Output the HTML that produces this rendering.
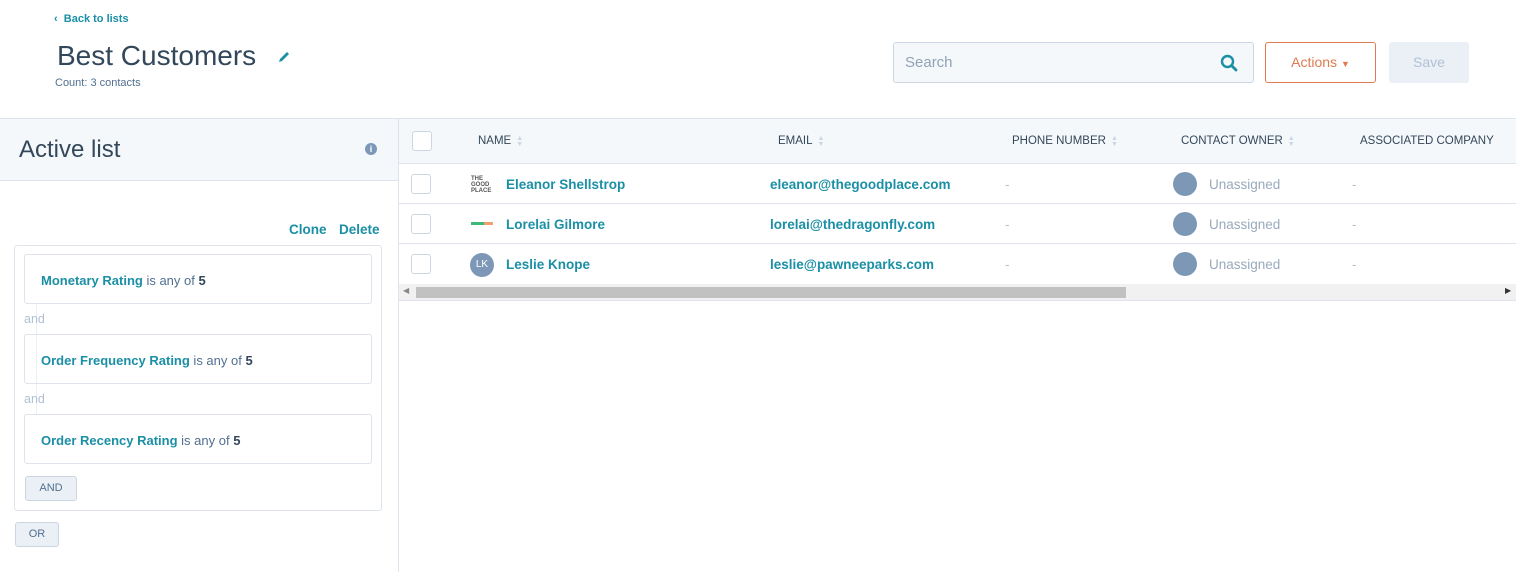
<!DOCTYPE html>
<html><head><style>
*{margin:0;padding:0;box-sizing:border-box}
body{width:1516px;height:572px;background:#fff;font-family:"Liberation Sans",sans-serif;position:relative;overflow:hidden;color:#33475b}
.a{position:absolute}
.t{color:#1a8fa5;font-weight:bold}
.cb{position:absolute;left:12px;width:20px;height:20px;border:1px solid #cbd6e2;border-radius:3px;background:#fff}
.th{position:absolute;top:135px;font-size:11.5px;color:#33475b}
.sort{display:inline-block;width:8px;height:12px;vertical-align:-2px;margin-left:5px;color:#cbd6e2;font-size:7px;line-height:6px}
.row{position:absolute;left:399px;right:0;height:40px;border-bottom:1px solid #dfe3eb}
.row span{position:absolute;top:13px;font-size:13.5px}
.dash{color:#b0c1d4}
.own{position:absolute;left:774px;top:8px;width:24px;height:24px;border-radius:50%;background:#7c98b6}
.un{left:810px;color:#99a9bb}
.filt{position:absolute;left:24px;width:348px;height:50px;border:1px solid #dfe3eb;border-radius:3px;font-size:13px;padding:18px 0 0 16px;color:#516f90}
.filt b.t{font-weight:bold}
.and{position:absolute;left:24px;font-size:12.5px;color:#b0c1d4}
.btn{position:absolute;background:#eaf0f6;border:1px solid #cbd6e2;border-radius:3px;font-size:11px;color:#516f90;text-align:center}
</style></head><body>
<div class="a t" style="left:54px;top:13px;font-size:11px">‹&nbsp; Back to lists</div>
<div class="a" style="left:57px;top:40px;font-size:28px;color:#33475b">Best Customers</div>
<svg class="a" style="left:277px;top:50px" width="14" height="14" viewBox="0 0 14 14"><path d="M2 12 L3 9 L10 2 L12 4 L5 11 Z" fill="#1a8fa5"/></svg>
<div class="a" style="left:55px;top:77px;font-size:11px;color:#516f90">Count: 3 contacts</div>
<div class="a" style="left:893px;top:42px;width:361px;height:41px;border:1px solid #cbd6e2;border-radius:3px;background:#f5f8fa"></div>
<div class="a" style="left:905px;top:54px;font-size:15px;color:#8fa2b6">Search</div>
<svg class="a" style="left:1220px;top:54px" width="18" height="18" viewBox="0 0 18 18"><circle cx="7.5" cy="7.5" r="5.5" stroke="#1a8fa5" stroke-width="2.4" fill="none"/><path d="M11.5 11.5 L16 16" stroke="#1a8fa5" stroke-width="2.8" stroke-linecap="round"/></svg>
<div class="a" style="left:1265px;top:42px;width:111px;height:41px;border:1px solid #e07a4f;border-radius:3px;font-size:14px;color:#e07a4f;text-align:center;line-height:39px">Actions <span style="font-size:9px">▼</span></div>
<div class="a" style="left:1389px;top:42px;width:80px;height:41px;border-radius:3px;background:#eaf0f6;font-size:14px;color:#b0c1d4;text-align:center;line-height:40px">Save</div>

<div class="a" style="left:0;top:118px;width:1516px;height:1px;background:#dfe3eb"></div>
<div class="a" style="left:0;top:119px;width:398px;height:62px;background:#f5f8fa;border-bottom:1px solid #dfe3eb"></div>
<div class="a" style="left:19px;top:136px;font-size:24px;color:#33475b">Active list</div>
<div class="a" style="left:365px;top:143px;width:12px;height:12px;border-radius:50%;background:#7c98b6;color:#fff;font-size:9px;font-weight:bold;text-align:center;line-height:12px">i</div>
<div class="a" style="left:398px;top:119px;width:1px;height:453px;background:#dfe3eb"></div>
<div class="a t" style="left:289px;top:222px;font-size:13.5px">Clone</div>
<div class="a t" style="left:339px;top:222px;font-size:13.5px">Delete</div>
<div class="a" style="left:14px;top:245px;width:368px;height:266px;border:1px solid #dfe3eb;border-radius:3px"></div>
<div class="a" style="left:36px;top:304px;width:1px;height:110px;background:#eaf0f6"></div>
<div class="filt" style="top:254px"><b class="t">Monetary Rating</b> is any of <b style="color:#33475b">5</b></div>
<div class="and" style="top:312px">and</div>
<div class="filt" style="top:334px"><b class="t">Order Frequency Rating</b> is any of <b style="color:#33475b">5</b></div>
<div class="and" style="top:392px">and</div>
<div class="filt" style="top:414px"><b class="t">Order Recency Rating</b> is any of <b style="color:#33475b">5</b></div>
<div class="btn" style="left:25px;top:476px;width:52px;height:25px;line-height:23px">AND</div>
<div class="btn" style="left:15px;top:522px;width:44px;height:25px;line-height:23px">OR</div>

<div class="a" style="left:399px;top:119px;right:0;height:45px;background:#f5f8fa;border-bottom:1px solid #dfe3eb"></div>
<div class="cb" style="left:412px;top:131px"></div>
<div class="th" style="left:478px">NAME<span class="sort">▲<br>▼</span></div>
<div class="th" style="left:778px">EMAIL<span class="sort">▲<br>▼</span></div>
<div class="th" style="left:1012px">PHONE NUMBER<span class="sort">▲<br>▼</span></div>
<div class="th" style="left:1181px">CONTACT OWNER<span class="sort">▲<br>▼</span></div>
<div class="th" style="left:1360px">ASSOCIATED COMPANY</div>

<div class="row" style="top:164px"><div class="cb" style="top:10px"></div>
<div class="a" style="left:72px;top:12px;font-size:6px;line-height:6px;color:#555;font-weight:bold">THE<br>GOOD<br>PLACE</div>
<span class="t" style="left:107px">Eleanor Shellstrop</span><span class="t" style="left:371px">eleanor@thegoodplace.com</span><span class="dash" style="left:606px">-</span><div class="own"></div><span class="un">Unassigned</span><span class="dash" style="left:953px">-</span></div>
<div class="row" style="top:204px"><div class="cb" style="top:10px"></div>
<div class="a" style="left:72px;top:18px;width:22px;height:3px;background:linear-gradient(90deg,#3cb878 60%,#f0a070 60%)"></div>
<span class="t" style="left:107px">Lorelai Gilmore</span><span class="t" style="left:371px">lorelai@thedragonfly.com</span><span class="dash" style="left:606px">-</span><div class="own"></div><span class="un">Unassigned</span><span class="dash" style="left:953px">-</span></div>
<div class="row" style="top:244px;border-bottom:none"><div class="cb" style="top:10px"></div>
<div class="a" style="left:71px;top:9px;width:24px;height:24px;border-radius:50%;background:#7c98b6;color:#fff;font-size:10px;text-align:center;line-height:24px">LK</div>
<span class="t" style="left:107px">Leslie Knope</span><span class="t" style="left:371px">leslie@pawneeparks.com</span><span class="dash" style="left:606px">-</span><div class="own"></div><span class="un">Unassigned</span><span class="dash" style="left:953px">-</span></div>
<div class="a" style="left:399px;top:284px;right:0;height:17px;background:#f1f1f1;border-bottom:1px solid #dfe3eb"></div>
<div class="a" style="left:416px;top:287px;width:710px;height:11px;background:#c1c1c1"></div>
<div class="a" style="left:403px;top:286px;font-size:8px;color:#888">◀</div>
<div class="a" style="left:1505px;top:286px;font-size:8px;color:#333">▶</div>
</body></html>
